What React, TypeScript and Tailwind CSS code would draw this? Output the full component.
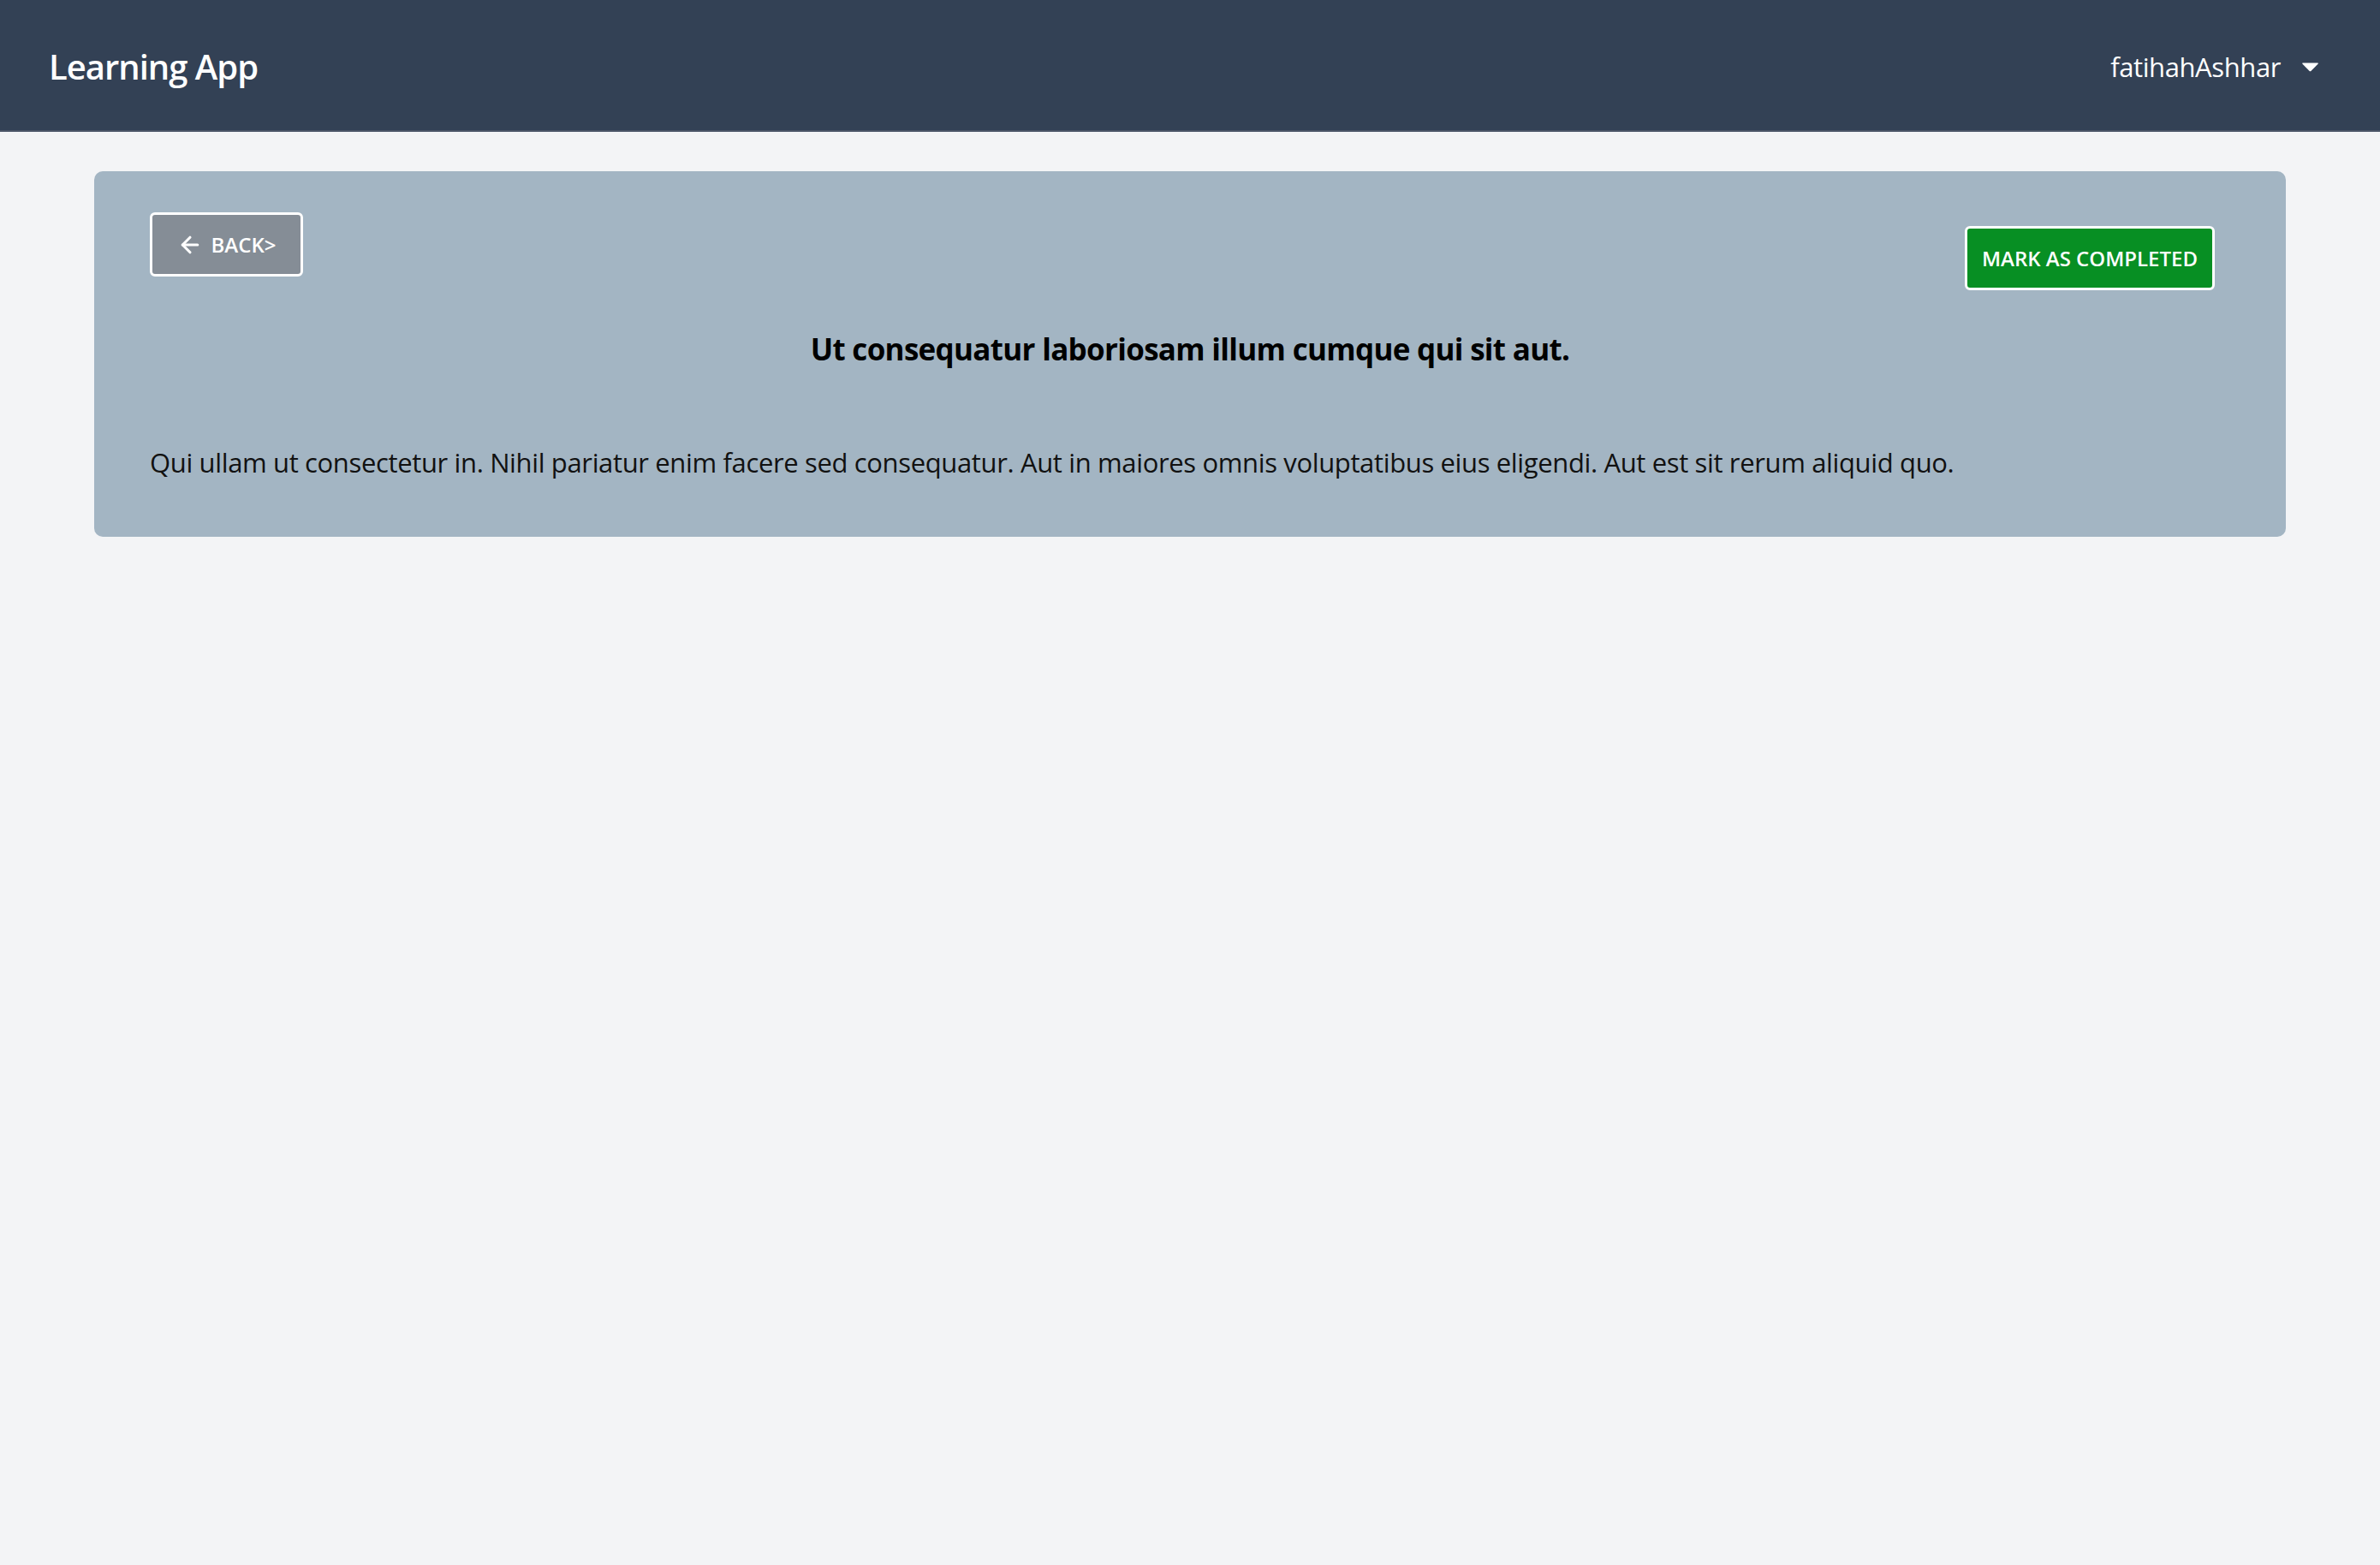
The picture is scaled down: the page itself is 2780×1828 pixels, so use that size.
import { ArrowLeft } from 'lucide-react'

const font = { fontFamily: '"Open Sans", "Noto Sans", sans-serif' }

function Caret() {
  return (
    <svg width="21" height="12" viewBox="0 0 21 12" className="ml-[24px]">
      <path d="M2 1.5 H19 Q20.5 1.5 19.5 2.8 L11.6 10.8 Q10.5 11.8 9.4 10.8 L1.5 2.8 Q0.5 1.5 2 1.5 Z" fill="#ffffff" />
    </svg>
  )
}

function Header() {
  return (
    <header className="h-[154px] bg-[#334155] border-b-2 border-[#4b5567] flex items-center justify-between pl-[57px] pr-[71px] pt-[4px]">
      <h1 className="text-white font-semibold text-[40px] leading-none tracking-[-1px]">Learning App</h1>
      <button className="flex items-center text-white text-[31px] leading-none tracking-[-0.4px]">
        fatihahAshhar
        <Caret />
      </button>
    </header>
  )
}

export default function App() {
  return (
    <div className="min-h-screen bg-[#f3f4f6]" style={font}>
      <Header />
      <main className="px-[110px] pt-[46px]">
        <div className="bg-[#a3b5c3] rounded-[10px] pt-[48px] pl-[65px] pr-[65px] pb-[65px]">
          <div className="flex justify-between items-start">
            <button className="h-[75px] w-[179px] bg-[#858d96] border-[3px] border-white rounded-[6px] flex items-center justify-center gap-[10px] text-white font-semibold text-[24px] leading-none">
              <ArrowLeft size={30} strokeWidth={2.5} />
              BACK&gt;
            </button>
            <button className="mt-[16px] mr-[18px] h-[75px] w-[292px] bg-[#078f23] border-[3px] border-white rounded-[6px] text-white font-semibold text-[24px] leading-none">
              MARK AS COMPLETED
            </button>
          </div>
          <h2 className="mt-[44px] text-center font-bold text-[35px] leading-[49px] tracking-[-0.7px] text-black">
            Ut consequatur laboriosam illum cumque qui sit aut.
          </h2>
          <p className="mt-[86px] text-[31px] leading-[44px] tracking-[-0.36px] text-[#111]">
            Qui ullam ut consectetur in. Nihil pariatur enim facere sed consequatur. Aut in maiores omnis voluptatibus eius eligendi. Aut est sit rerum aliquid quo.
          </p>
        </div>
      </main>
    </div>
  )
}
